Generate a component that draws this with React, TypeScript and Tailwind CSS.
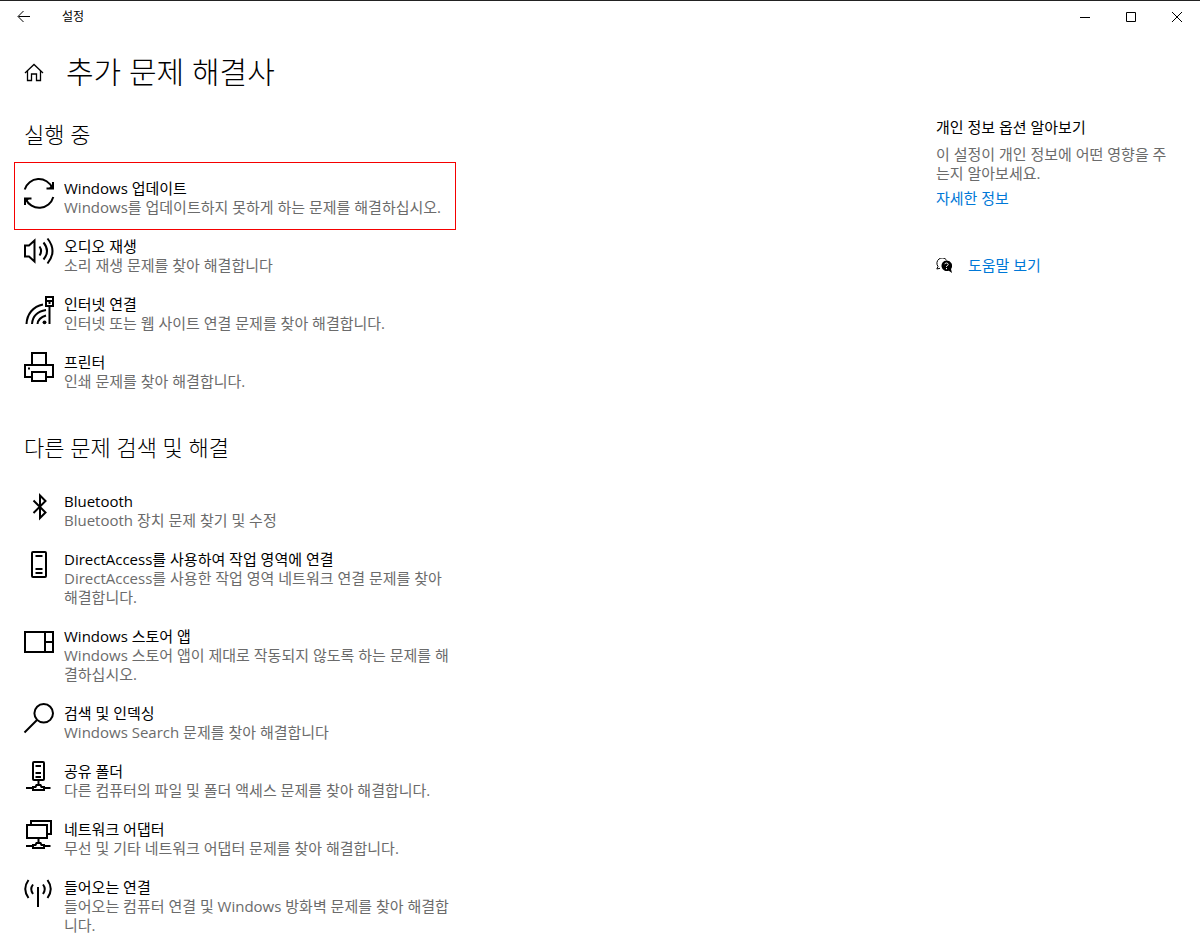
import React from 'react';

interface Troubleshooter {
  id: string;
  title: string;
  description: string;
  icon: React.ReactNode;
  highlighted?: boolean;
}

const Icon = ({ children }: { children: React.ReactNode }) => (
  <svg
    viewBox="0 0 32 32"
    className="-mt-0.5 h-8 w-8 shrink-0"
    fill="none"
    stroke="currentColor"
    strokeWidth="2"
    aria-hidden="true"
  >
    {children}
  </svg>
);

const running: Troubleshooter[] = [
  {
    id: 'update',
    title: 'Windows 업데이트',
    description: 'Windows를 업데이트하지 못하게 하는 문제를 해결하십시오.',
    highlighted: true,
    icon: (
      <Icon>
        <path d="M1.7 12.5A14.7 14.7 0 0 1 29.3 11M30.3 20A14.7 14.7 0 0 1 2.7 22" />
        <path d="M30 5v6.500h-6.500M2 28v-6.500h6.500" />
        <path d="M30 7v5h-5zM2 26v-5h5z" fill="currentColor" stroke="none" />
      </Icon>
    ),
  },
  {
    id: 'audio',
    title: '오디오 재생',
    description: '소리 재생 문제를 찾아 해결합니다',
    icon: (
      <Icon>
        <path d="M2 10.500V21.500H6L11.500 26.500V5.500L6 10.500Z" />
        <path d="M16.500 11.500Q19.700 16 16.500 20.500M20.500 7.500Q27.500 16 20.500 24.500M24.500 3.500Q34.500 16 24.500 28.500" />
      </Icon>
    ),
  },
  {
    id: 'internet',
    title: '인터넷 연결',
    description: '인터넷 또는 웹 사이트 연결 문제를 찾아 해결합니다.',
    icon: (
      <Icon>
        <path d="M3.500 31C4 21 10 13.500 20 11.500M9 31C9.500 24 14 18.500 23 17M14.500 31C15 27 17.500 24 23 22.500" />
        <path d="M23 4h7v9h-7zM23 8h7M26.500 8v3M26.500 13v18" />
        <circle cx="21.500" cy="29.300" r="1.900" fill="currentColor" stroke="none" />
      </Icon>
    ),
  },
  {
    id: 'printer',
    title: '프린터',
    description: '인쇄 문제를 찾아 해결합니다.',
    icon: (
      <Icon>
        <path d="M9 13V2h14v11M9 26H2V14h28v12h-7M9 21h14v9H9z" />
        <path d="M5 17.500h2" />
      </Icon>
    ),
  },
];

const others: Troubleshooter[] = [
  {
    id: 'bluetooth',
    title: 'Bluetooth',
    description: 'Bluetooth 장치 문제 찾기 및 수정',
    icon: (
      <Icon>
        <path d="M10.500 10.500 22.500 22.500 17 28V5.500L22.500 11 10.500 23" />
      </Icon>
    ),
  },
  {
    id: 'directaccess',
    title: 'DirectAccess를 사용하여 작업 영역에 연결',
    description: 'DirectAccess를 사용한 작업 영역 네트워크 연결 문제를 찾아 해결합니다.',
    icon: (
      <Icon>
        <rect x="9" y="4" width="14" height="25" rx="1" />
        <path d="M12.500 8h7M12.500 21h7M12.500 25h7" />
      </Icon>
    ),
  },
  {
    id: 'store',
    title: 'Windows 스토어 앱',
    description: 'Windows 스토어 앱이 제대로 작동되지 않도록 하는 문제를 해결하십시오.',
    icon: (
      <Icon>
        <path d="M2 7h28v20H2zM22 7v20M22 17h8" />
      </Icon>
    ),
  },
  {
    id: 'search',
    title: '검색 및 인덱싱',
    description: 'Windows Search 문제를 찾아 해결합니다',
    icon: (
      <Icon>
        <circle cx="20.700" cy="11.300" r="9.300" />
        <path d="M14 18 1.500 30.500" />
      </Icon>
    ),
  },
  {
    id: 'shared-folder',
    title: '공유 폴더',
    description: '다른 컴퓨터의 파일 및 폴더 액세스 문제를 찾아 해결합니다.',
    icon: (
      <Icon>
        <rect x="10" y="2" width="11" height="18" rx="1" />
        <path d="M12.500 6h5.500M12.500 13h5.500M12.500 17h5.500M15.500 20v4M3 28h7M21 28h6.500M10 30v-3h2.500l1-2h4l1 2H21v3z" />
      </Icon>
    ),
  },
  {
    id: 'adapter',
    title: '네트워크 어댑터',
    description: '무선 및 기타 네트워크 어댑터 문제를 찾아 해결합니다.',
    icon: (
      <Icon>
        <path d="M4 7h20v13H4zM8 6V3h20v13h-3" />
        <path d="M15.500 20v4M3 28h7M21 28h6.500M10 30v-3h2.500l1-2h4l1 2H21v3z" />
      </Icon>
    ),
  },
  {
    id: 'incoming',
    title: '들어오는 연결',
    description: '들어오는 컴퓨터 연결 및 Windows 방화벽 문제를 찾아 해결합니다.',
    icon: (
      <Icon>
        <path d="M15 11v20M10 8.500Q6.500 13 10 18M20 8.500Q23.500 13 20 18M5.500 4Q-1 13 5.500 22M24.500 4Q31 13 24.500 22" />
      </Icon>
    ),
  },
];

const TroubleshooterRow = ({ item }: { item: Troubleshooter }) => (
  <li
    className={
      item.highlighted
        ? '-mt-[17px] -ml-[10px] mb-[7px] border border-[#f50000] pt-4 pb-3 pl-2'
        : 'mb-5 -ml-px last:mb-0'
    }
  >
    <button type="button" className="flex w-full items-start gap-[9px] text-left">
      {item.icon}
      <span className="min-w-0 flex-1">
        <span className="block">{item.title}</span>
        <span className="block text-[#6b6b6b]">{item.description}</span>
      </span>
    </button>
  </li>
);

const TitleBar = () => (
  <header className="flex h-[33px] shrink-0 items-center border-t border-[#222222] text-xs">
    <button type="button" aria-label="뒤로" className="flex h-8 w-12 items-center justify-center">
      <svg viewBox="0 0 14 14" className="h-3.5 w-3.5" fill="none" stroke="currentColor" aria-hidden="true">
        <path d="M13 6.500H1.500M6.500 1 1 6.500l5.500 5.500" />
      </svg>
    </button>
    <span className="ml-3.5 flex-1">설정</span>
    <button type="button" aria-label="최소화" className="flex h-8 w-[46px] items-center justify-center">
      <svg viewBox="0 0 10 10" className="h-2.5 w-2.5" stroke="currentColor" aria-hidden="true">
        <path d="M0 5.500h10" />
      </svg>
    </button>
    <button type="button" aria-label="최대화" className="flex h-8 w-[46px] items-center justify-center">
      <svg viewBox="0 0 10 10" className="h-2.5 w-2.5" fill="none" stroke="currentColor" aria-hidden="true">
        <path d="M.5.5h9v9h-9z" />
      </svg>
    </button>
    <button type="button" aria-label="닫기" className="flex h-8 w-[46px] items-center justify-center">
      <svg viewBox="0 0 10 10" className="h-2.5 w-2.5" stroke="currentColor" aria-hidden="true">
        <path d="m0 0 10 10M10 0 0 10" />
      </svg>
    </button>
  </header>
);

const HelpPanel = () => (
  <aside className="w-[264px] shrink-0 pr-6">
    <h2>개인 정보 옵션 알아보기</h2>
    <p className="mt-2 text-[#6b6b6b]">이 설정이 개인 정보에 어떤 영향을 주는지 알아보세요.</p>
    <a href="#privacy" className="mt-1.5 block text-[#0078d7]">
      자세한 정보
    </a>
    <a href="#help" className="mt-12 flex items-center gap-4 text-[#0078d7]">
      <svg viewBox="0 0 16 16" className="h-4 w-4 text-black" fill="none" stroke="currentColor" aria-hidden="true">
        <path d="M2 8.500A5 5 0 1 1 10.500 2M2 8.500.8 11 4 10.300" />
        <path
          d="M10.500 2.500a5.300 5.300 0 1 0 2.300 10.200L16 15l-1-4A5.300 5.300 0 0 0 10.500 2.500z"
          fill="currentColor"
          stroke="none"
        />
        <path d="M8.800 6.200q.2-1.200 1.700-1.200T12.200 6.500q0 .8-1.700 1.800v.7M10.500 10v1.200" stroke="white" />
      </svg>
      도움말 보기
    </a>
  </aside>
);

const App: React.FC = () => {
  return (
    <div className="flex min-h-screen flex-col bg-white font-['Open_Sans','Noto_Sans_CJK_KR',sans-serif] text-[15px] leading-[19px] text-black">
      <TitleBar />
      <div className="mt-[19px] flex items-center gap-[22px] pl-6">
        <a href="#home" aria-label="홈">
          <svg viewBox="0 0 20 20" className="h-5 w-5" fill="none" stroke="currentColor" strokeWidth="1.300" aria-hidden="true">
            <path d="M1 11 10 2.500l9 8.500M3.500 9v9.500h4V12h5v6.500h4V9" />
          </svg>
        </a>
        <h1 className="text-[30px] leading-10 font-light">추가 문제 해결사</h1>
      </div>

      <div className="mt-[26px] flex justify-between">
        <main className="w-[456px] pl-6">
          <h2 className="pt-1 text-[22px] leading-6 font-light">실행 중</h2>
          <ul className="mt-[33px]">
            {running.map((item) => (
              <TroubleshooterRow key={item.id} item={item} />
            ))}
          </ul>
          <h2 className="mt-11 text-[22px] leading-6 font-light">다른 문제 검색 및 해결</h2>
          <ul className="mt-[33px]">
            {others.map((item) => (
              <TroubleshooterRow key={item.id} item={item} />
            ))}
          </ul>
        </main>
        <HelpPanel />
      </div>
    </div>
  );
};

export default App;
